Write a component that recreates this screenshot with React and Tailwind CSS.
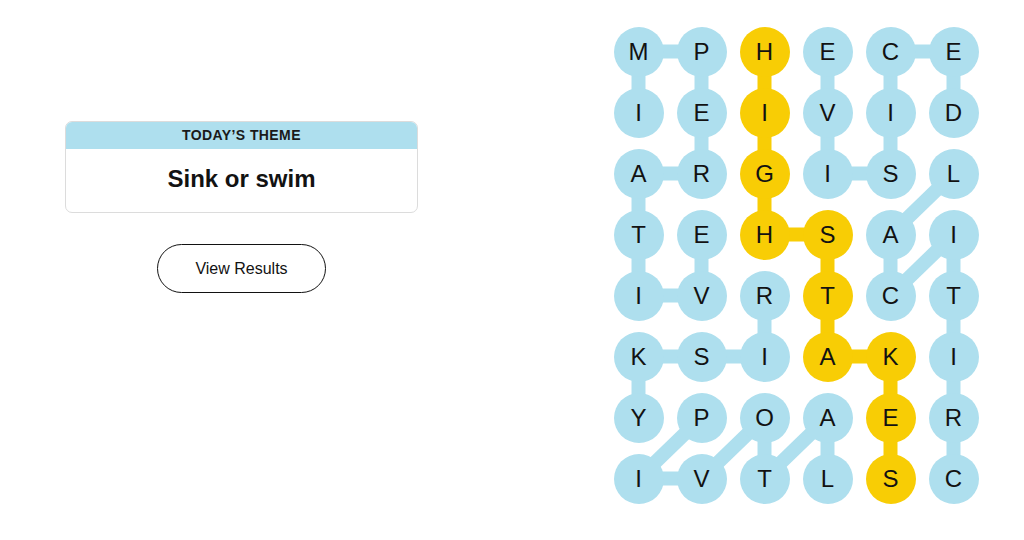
import React from 'react';

const COL_W = 63;
const ROW_H = 61;

const letters = [
  'MPHECE',
  'IEIVID',
  'ARGISL',
  'TEHSAI',
  'IVRTCT',
  'KSIAKI',
  'YPOAER',
  'IVTLSC',
];

// found words, as [row, col] paths
const words = [
  { path: [[1, 0], [0, 0], [0, 1], [1, 1], [2, 1], [2, 0], [3, 0], [4, 0], [4, 1], [3, 1]] },
  { path: [[1, 5], [0, 5], [0, 4], [1, 4], [2, 4], [2, 3], [1, 3], [0, 3]] },
  { path: [[7, 5], [6, 5], [5, 5], [4, 5], [3, 5], [4, 4], [3, 4], [2, 5]] },
  { path: [[4, 2], [5, 2], [5, 1], [5, 0], [6, 0]] },
  { path: [[6, 1], [7, 0], [7, 1], [6, 2], [7, 2], [6, 3], [7, 3]] },
  { path: [[0, 2], [1, 2], [2, 2], [3, 2], [3, 3], [4, 3], [5, 3], [5, 4], [6, 4], [7, 4]], spangram: true },
];

const BLUE = '#aedfee';
const YELLOW = '#f8cd05';

const spanCells = new Set(
  words.filter((w) => w.spangram).flatMap((w) => w.path.map(([r, c]) => `${r}-${c}`))
);

const cx = (c) => c * COL_W + COL_W / 2;
const cy = (r) => r * ROW_H + ROW_H / 2;

function Board() {
  return (
    <div className="relative w-[378px] h-[488px]">
      <svg className="absolute inset-0" width="378" height="488">
        {words.map((w, i) =>
          w.path.slice(1).map(([r, c], j) => {
            const [pr, pc] = w.path[j];
            return (
              <line
                key={`${i}-${j}`}
                x1={cx(pc)}
                y1={cy(pr)}
                x2={cx(c)}
                y2={cy(r)}
                stroke={w.spangram ? YELLOW : BLUE}
                strokeWidth="14"
              />
            );
          })
        )}
      </svg>
      <div className="relative grid grid-cols-[repeat(6,63px)] grid-rows-[repeat(8,61px)]">
        {letters.map((row, r) =>
          row.split('').map((ch, c) => (
            <div key={`${r}-${c}`} className="flex items-center justify-center">
              <button
                className={`w-[50px] h-[50px] rounded-full flex items-center justify-center text-[24px] text-[#121212] ${
                  spanCells.has(`${r}-${c}`) ? 'bg-[#f8cd05]' : 'bg-[#aedfee]'
                }`}
              >
                {ch}
              </button>
            </div>
          ))
        )}
      </div>
    </div>
  );
}

export default function App() {
  return (
    <div className="w-[1024px] h-[540px] bg-white flex font-['Liberation_Sans',Arial,sans-serif]">
      <div className="w-[483px] pt-[121px] flex flex-col items-center">
        <div className="w-[353px] rounded-[7px] border border-[#dcdcdc] overflow-hidden">
          <div className="h-[27px] bg-[#aedfee] flex items-center justify-center">
            <span className="text-[14px] font-bold tracking-[0.4px] text-[#1a1a1a]">TODAY’S THEME</span>
          </div>
          <div className="h-[63px] pb-[3px] flex items-center justify-center">
            <h1 className="text-[24px] font-bold text-[#121212]">Sink or swim</h1>
          </div>
        </div>
        <button className="mt-[31px] w-[169px] h-[49px] rounded-full border border-[#121212] text-[16px] text-[#121212]">
          View Results
        </button>
      </div>
      <div className="ml-[124px] pt-[21px]">
        <Board />
      </div>
    </div>
  );
}
